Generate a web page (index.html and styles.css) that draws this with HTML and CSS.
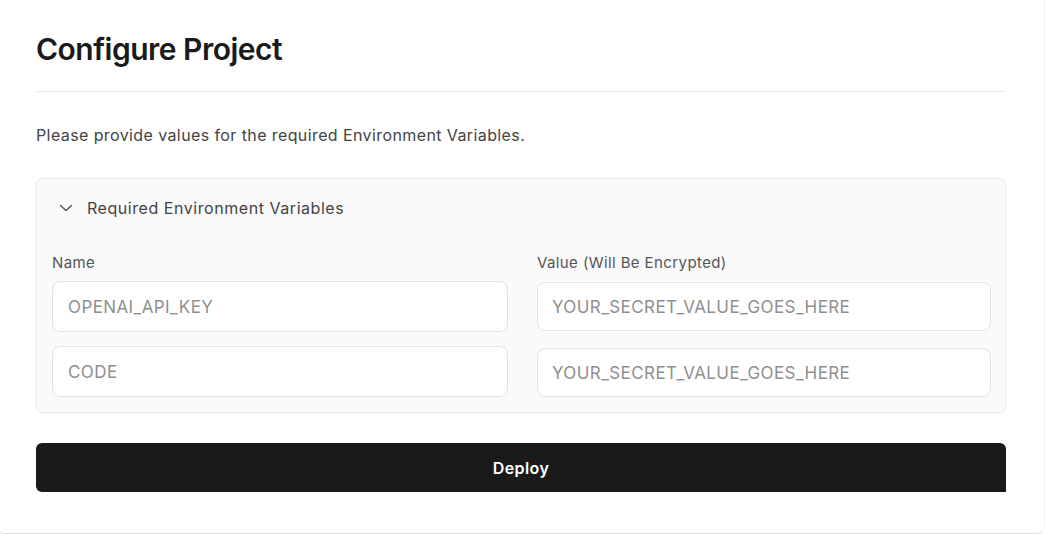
FILE: index.html
```html
<!DOCTYPE html>
<html lang="en">
<head>
    <meta charset="UTF-8">
    <meta name="viewport" content="width=device-width, initial-scale=1.0">
    <title>Configure Project</title>
    <link rel="stylesheet" href="styles.css">
</head>
<body>
    <div class="card">
        <h1 class="title">Configure Project</h1>
        <hr class="divider">
        <p class="intro">Please provide values for the required Environment Variables.</p>

        <div class="env-panel">
            <div class="env-header">
                <svg class="chevron" width="16" height="16" viewBox="0 0 16 16" fill="none">
                    <path d="M2.5 5.5L8 10.5L13.5 5.5" stroke="#555" stroke-width="1.4" stroke-linecap="round" stroke-linejoin="round"/>
                </svg>
                <span>Required Environment Variables</span>
            </div>

            <div class="env-grid">
                <div class="env-col">
                    <label class="env-label">Name</label>
                    <input class="env-input name-input" type="text" placeholder="OPENAI_API_KEY">
                    <input class="env-input name-input" type="text" placeholder="CODE">
                </div>
                <div class="env-col">
                    <label class="env-label">Value (Will Be Encrypted)</label>
                    <input class="env-input value-input" type="text" placeholder="YOUR_SECRET_VALUE_GOES_HERE">
                    <input class="env-input value-input" type="text" placeholder="YOUR_SECRET_VALUE_GOES_HERE">
                </div>
            </div>
        </div>

        <button class="deploy-btn">Deploy</button>
    </div>
</body>
</html>
```

FILE: styles.css
```css
body {
    margin: 0;
    font-family: Inter, "Noto Sans", sans-serif;
    background: #fff;
    color: #1a1a1a;
}
.card {
    width: 970px;
    padding: 32px 38px 41px 36px;
    border-bottom: 1px solid #dedede;
    border-right: 1px solid #f5f5f5;
    border-bottom-right-radius: 8px;
    border-bottom-left-radius: 4px;
}
.title {
    margin: 0;
    font-size: 30px;
    line-height: 34px;
    font-weight: 600;
    letter-spacing: -0.5px;
    color: #1a1a1a;
}
.divider {
    margin: 25px 0 0;
    border: none;
    border-top: 1px solid #e8e8e8;
}
.intro {
    margin: 32px 0 0;
    font-size: 16px;
    line-height: 22px;
    letter-spacing: 0.4px;
    color: #444;
}
.env-panel {
    margin-top: 32px;
    padding: 15px;
    background: #fafafa;
    border: 1px solid #ebebeb;
    border-radius: 6px;
}
.env-header {
    display: flex;
    align-items: center;
    gap: 13px;
    height: 27px;
    padding-left: 6px;
    font-size: 16px;
    letter-spacing: 0.55px;
    color: #444;
}
.env-grid {
    display: grid;
    grid-template-columns: 456px 454px;
    gap: 29px;
    margin-top: 32px;
}
.env-col {
    display: flex;
    flex-direction: column;
}
.env-label {
    font-size: 15px;
    line-height: 20px;
    letter-spacing: 0.4px;
    color: #555;
    margin-bottom: 8px;
}
.env-input {
    box-sizing: border-box;
    width: 100%;
    padding: 0 15px;
    font-family: inherit;
    font-size: 17px;
    letter-spacing: 0.4px;
    color: #1a1a1a;
    background: #fff;
    border: 1px solid #e3e3e3;
    border-radius: 8px;
    outline: none;
}
.env-input::placeholder {
    color: #8f8f8f;
}
.name-input {
    height: 51px;
    margin-bottom: 14px;
}
.value-input {
    height: 49px;
    margin-top: 1px;
    margin-bottom: 16px;
    padding-left: 14px;
}
.env-col .env-input:last-child {
    margin-bottom: 0;
}
.deploy-btn {
    display: block;
    width: 970px;
    height: 49px;
    margin-top: 30px;
    background: #1a1a1a;
    color: #fff;
    border: none;
    border-radius: 6px 6px 0 6px;
    font-family: inherit;
    font-size: 16px;
    font-weight: 600;
    letter-spacing: 0.4px;
    cursor: pointer;
}
```
